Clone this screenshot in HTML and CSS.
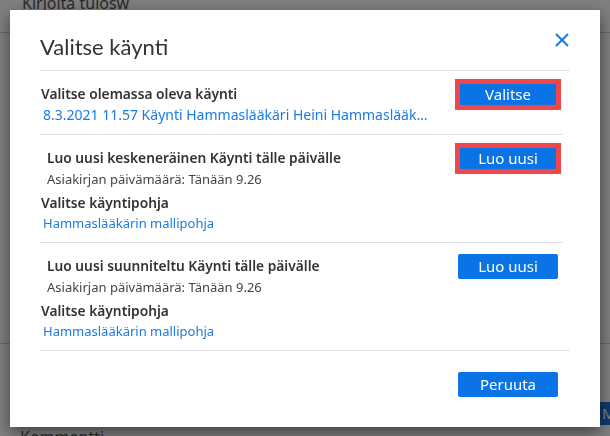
FILE: index.html
```html
<!doctype html>
<html lang="fi">
<head>
  <meta charset="utf-8">
  <meta name="viewport" content="width=device-width, initial-scale=1">
  <title>Valitse käynti</title>
  <link rel="stylesheet" href="styles.css">
</head>
<body>
  <div class="page">
    <div class="page-field">Kirjoita tulosw</div>
    <div class="page-spacer"></div>
    <div class="page-tools"><span class="page-btn">M</span></div>
    <div class="page-field page-field-low">Kommentti</div>
  </div>

  <div class="backdrop"></div>

  <div class="modal" role="dialog" aria-labelledby="modal-title">
    <header class="modal-head">
      <h2 id="modal-title" class="modal-title">Valitse käynti</h2>
      <button class="modal-close" type="button" aria-label="Sulje">
        <svg viewBox="0 0 14 14" aria-hidden="true">
          <line x1="1" y1="1" x2="13" y2="13" />
          <line x1="1" y1="13" x2="13" y2="1" />
        </svg>
      </button>
    </header>

    <div class="modal-body">
      <section class="visit">
        <div class="visit-head">
          <h3 class="visit-title visit-title-flush">Valitse olemassa oleva käynti</h3>
          <button class="btn btn-marked" type="button">Valitse</button>
        </div>
        <a class="visit-link visit-link-cut" href="#">8.3.2021 11.57 Käynti Hammaslääkäri Heini Hammaslääkäri, Hammashoitola</a>
      </section>

      <section class="visit">
        <div class="visit-head">
          <h3 class="visit-title">Luo uusi keskeneräinen Käynti tälle päivälle</h3>
          <button class="btn btn-marked" type="button">Luo uusi</button>
        </div>
        <p class="visit-date">Asiakirjan päivämäärä: Tänään 9.26</p>
        <h4 class="visit-label">Valitse käyntipohja</h4>
        <a class="visit-link" href="#">Hammaslääkärin mallipohja</a>
      </section>

      <section class="visit">
        <div class="visit-head">
          <h3 class="visit-title">Luo uusi suunniteltu Käynti tälle päivälle</h3>
          <button class="btn" type="button">Luo uusi</button>
        </div>
        <p class="visit-date">Asiakirjan päivämäärä: Tänään 9.26</p>
        <h4 class="visit-label">Valitse käyntipohja</h4>
        <a class="visit-link" href="#">Hammaslääkärin mallipohja</a>
      </section>
    </div>

    <footer class="modal-foot">
      <button class="btn" type="button">Peruuta</button>
    </footer>
  </div>
</body>
</html>
```

FILE: styles.css
```css
:root {
  box-sizing: border-box;
  --text: #333;
  --text-soft: #444;
  --line: #dde1e6;
  --blue: #0a74e6;
  --link: #1b7be2;
  --mark: #f0474a;
}

*,
*::before,
*::after {
  box-sizing: inherit;
}

body {
  margin: 0;
  height: 100vh;
  overflow: hidden;
  background: #fff;
  color: var(--text);
  font: 13px/20px "Noto Sans", "Open Sans", sans-serif;
}

/* page behind the dialog */
.page-field {
  height: 42px;
  margin-top: -9px;
  padding: 0 22px;
  border-bottom: 1px solid #ccc;
  color: #555;
  font-size: 16px;
  line-height: 24px;
}

.page-spacer {
  height: 311px;
  border-bottom: 1px solid #ccc;
}

.page-tools {
  display: flex;
  justify-content: flex-end;
  padding-top: 58px;
}

.page-btn {
  width: 14px;
  height: 23px;
  margin-right: -4px;
  padding-left: 2px;
  background: #1a73e0;
  color: #fff;
  font-size: 15px;
  line-height: 23px;
}

.page-field-low {
  height: 11px;
  margin-top: 0;
  padding-left: 20px;
  overflow: hidden;
  border: 0;
}

.backdrop {
  position: fixed;
  inset: 0;
  background: rgba(0, 0, 0, 0.5);
}

/* dialog */
.modal {
  position: fixed;
  top: 10px;
  left: 10px;
  width: 590px;
  height: 417px;
  padding: 0 30px;
  background: #fff;
  box-shadow: 0 5px 15px rgba(0, 0, 0, 0.5);
}

.modal-head {
  display: flex;
  align-items: flex-start;
  justify-content: space-between;
  height: 61px;
  padding-top: 22px;
  border-bottom: 1px solid var(--line);
}

.modal-title {
  margin: 0;
  font-family: Lato, "Noto Sans", sans-serif;
  font-size: 22px;
  font-weight: 400;
  line-height: 30px;
  color: var(--text);
}

.modal-close {
  display: block;
  margin: 1px 1px 0 0;
  padding: 0;
  background: none;
  border: 0;
  cursor: pointer;
}

.modal-close svg {
  display: block;
  width: 14px;
  height: 14px;
  stroke: var(--link);
  stroke-width: 2;
}

.modal-body {
  margin-right: 7px;
}

.visit {
  padding: 12px 0 9px;
  border-bottom: 1px solid var(--line);
}

.visit:last-child {
  border-bottom: 0;
}

.visit-head {
  display: flex;
  align-items: center;
  justify-content: space-between;
  height: 22px;
}

.visit-title {
  margin: 0 0 0 7px;
  font-size: 13.75px;
  font-weight: 600;
}

.visit-title-flush {
  margin-left: 1px;
}

.visit-date {
  margin: 0 0 4px 7px;
  color: var(--text-soft);
}

.visit-label {
  margin: 0 0 0 1px;
  font-size: 13.75px;
  font-weight: 600;
}

.visit-link {
  display: block;
  padding-left: 3px;
  color: var(--link);
  text-decoration: none;
}

.visit-link-cut {
  width: 391px;
  overflow: hidden;
  white-space: nowrap;
  text-overflow: ellipsis;
  font-size: 14px;
}

.btn {
  width: 100px;
  height: 25px;
  margin-right: 5px;
  padding: 0;
  background: var(--blue);
  border: 0;
  border-radius: 2px;
  color: #fff;
  font: 15px/25px "Noto Sans", "Open Sans", sans-serif;
  cursor: pointer;
}

.btn-marked {
  border: 2px solid var(--mark);
  border-radius: 0;
  outline: 3px solid var(--mark);
  line-height: 21px;
}

.modal-foot {
  display: flex;
  justify-content: flex-end;
  padding: 21px 7px 0 0;
  border-top: 1px solid var(--line);
}
```
